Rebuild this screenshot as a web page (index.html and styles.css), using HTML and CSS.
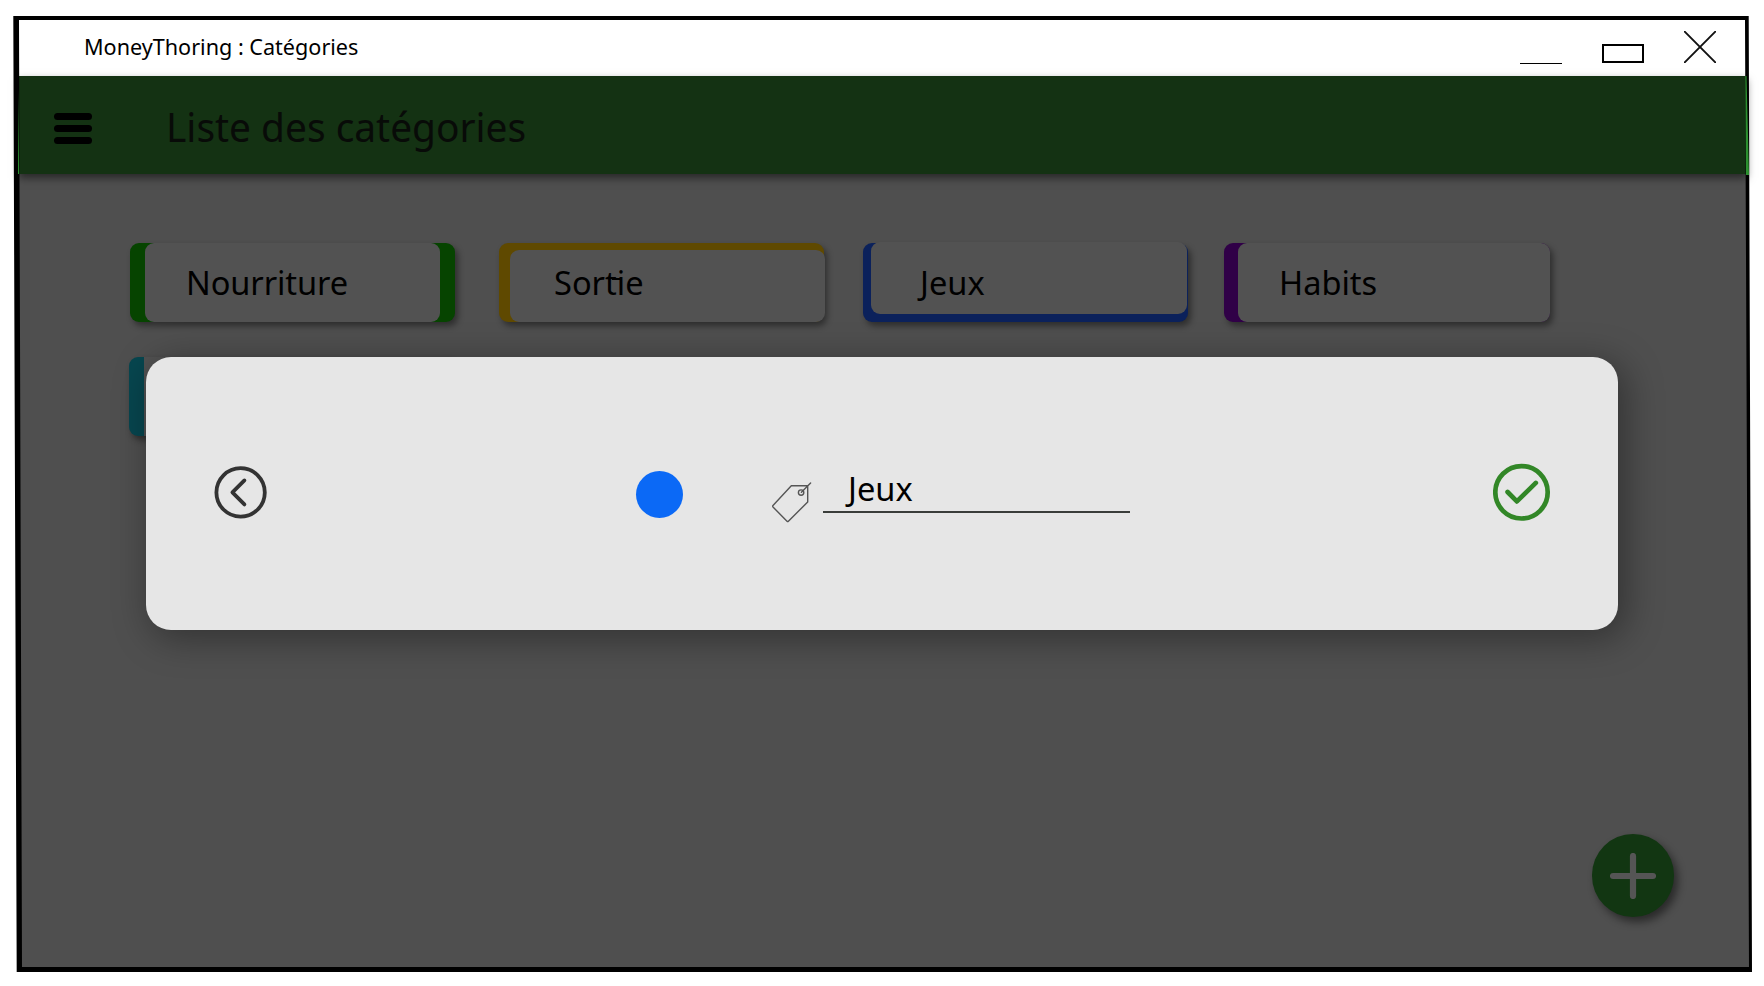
FILE: index.html
```html
<!DOCTYPE html>
<html lang="fr">
<head>
<meta charset="utf-8">
<title>MoneyThoring : Catégories</title>
<link rel="stylesheet" href="styles.css">
</head>
<body>
<div class="window">
  <header class="titlebar">
    <span class="title">MoneyThoring : Catégories</span>
    <div class="controls">
      <span class="minimize"></span>
      <span class="maximize"></span>
      <svg class="close" width="32" height="32" viewBox="0 0 32 32"><path d="M.7.7 31.3 31.3M31.3.7.7 31.3"/></svg>
    </div>
  </header>
  <nav class="appbar">
    <div class="menu"><i></i><i></i><i></i></div>
    <h1 class="heading">Liste des catégories</h1>
  </nav>
  <main class="content">
    <div class="cards">
      <div class="card food"><div class="face"><span>Nourriture</span></div></div>
      <div class="card outing"><div class="face"><span class="tie">Sortie</span></div></div>
      <div class="card games"><div class="face"><span>Jeux</span></div></div>
      <div class="card clothes"><div class="face"><span>Habits</span></div></div>
      <div class="card other"><div class="face"></div></div>
    </div>
  </main>
</div>
<svg class="frame" width="1764" height="986" viewBox="0 0 1764 986">
  <path d="M13.3 16H1748.7L1752 972H16.7ZM19 20 22 967H1749L1745 20Z" fill-rule="evenodd"/>
  <path class="edge" d="M18.6 90 19.1 174H18ZM1745.3 76 1746.5 76 1749 175H1746Z"/>
</svg>
<div class="fab"><svg width="46" height="46" viewBox="0 0 46 46"><path d="M23 3V43M3 23H43"/></svg></div>
<section class="dialog">
  <svg class="back" width="54" height="54" viewBox="0 0 54 54"><circle cx="27.6" cy="27.4" r="24.2"/><path d="M31.4 15.4 19.4 27.4 31.4 39.4"/></svg>
  <span class="swatch"></span>
  <svg class="tag" width="42" height="42" viewBox="770 481 42 42"><path d="M791.3 485.8H807.7V502L788.4 521.2Q787.7 521.9 787 521.2L773 507Q772.4 506.2 773 505.4ZM801.4 492.3 810.6 483.1"/><circle cx="801.1" cy="492.6" r="2.7"/></svg>
  <div class="field"><span>Jeux</span></div>
  <svg class="ok" width="58" height="58" viewBox="0 0 58 58"><circle cx="28.5" cy="29.3" r="26.2"/><path d="M14.6 29 23.9 38.4 42.8 19.9"/></svg>
</section>
</body>
</html>
```
FILE: styles.css
```css
* { box-sizing: border-box; }
body {
  margin: 0;
  width: 1764px;
  height: 986px;
  overflow: hidden;
  background: #fff;
  color: #000;
  font-family: "Noto Sans", "Open Sans", sans-serif;
  font-size: 32.6px;
}
svg { display: block; fill: none; stroke-linecap: round; stroke-linejoin: round; }
.window { padding-top: 20px; }
.titlebar {
  display: flex;
  justify-content: space-between;
  height: 56px;
  margin: 0 19px;
  padding: 11px 29px 0 65px;
}
.title { font-size: 21.6px; line-height: 32px; white-space: nowrap; }
.controls { display: flex; }
.minimize { width: 42px; height: 1px; margin: 32px 40px 0 0; background: #000; }
.maximize { width: 42px; height: 19px; margin: 13px 40px 0 0; border: 2px solid #000; }
.close { stroke: #111; stroke-width: 1.9; }
.appbar {
  position: relative;
  display: flex;
  height: 98px;
  margin: 0 18px;
  padding: 37px 0 0 36px;
  background: #143213;
  box-shadow: 1px 4px 8px rgba(0, 0, 0, .5);
}
.menu { display: grid; gap: 5px; width: 38px; height: 31px; }
.menu i { height: 7px; border-radius: 4px; background: #000; }
.heading {
  margin: -14px 0 0 74px;
  color: #080b08;
  font-size: 40.6px;
  font-weight: 400;
  line-height: 56px;
  white-space: nowrap;
  transform: scaleX(.958);
  transform-origin: left;
}
.content {
  height: 794px;
  margin: 0 15px 0 19px;
  padding: 69px 0 0 111px;
  background: #4f4f4f;
}
.cards {
  display: grid;
  grid-template-columns: 369px 364px 361px 326px;
  row-gap: 35px;
}
.card {
  display: flex;
  width: 325px;
  height: 79px;
  border-radius: 9px;
  box-shadow: 3px 4px 6px rgba(0, 0, 0, .42);
}
.face {
  flex: 1;
  border-radius: 9px;
  background: #525252;
  line-height: 44px;
}
.food { padding: 0 15px; background: #064400; }
.food .face { padding: 18px 0 0 41px; letter-spacing: -.1px; }
.outing { padding: 7px 0 0 11px; background: #5f4900; }
.outing .face { margin-right: -1px; padding: 11px 0 0 44px; }
.games { padding: 0 1px 8px 8px; background: #0b215b; }
.games .face { margin-top: -1px; padding: 19px 0 0 49px; }
.clothes { width: 326px; padding-left: 14px; background: #300047; }
.clothes .face { padding: 18px 0 0 41px; }
.other { margin-left: -1px; padding-left: 15px; background: #07464f; }
.other .face { border-radius: 0 9px 9px 0; }
.tie { position: relative; }
/* joins the crossbar of the t to the i */
.tie::after {
  content: "";
  position: absolute;
  left: 58px;
  top: 18px;
  width: 10px;
  height: 2px;
  background: #000;
}
.frame { position: absolute; left: 0; top: 0; fill: #000; }
.edge { fill: #2c9130; }
.fab {
  position: absolute;
  left: 1591.5px;
  top: 834.3px;
  display: grid;
  place-items: center;
  width: 82.5px;
  height: 82.5px;
  border-radius: 50%;
  background: #123612;
  box-shadow: 4px 5px 8px rgba(0, 0, 0, .48);
}
.fab svg { stroke: #555; stroke-width: 6.2; }
.dialog {
  position: absolute;
  left: 146px;
  top: 357px;
  display: flex;
  align-items: flex-start;
  width: 1472px;
  height: 273px;
  padding: 106px 67px 0;
  border-radius: 25px;
  background: #e6e6e6;
  box-shadow: 6px 7px 36px 2px rgba(0, 0, 0, .36);
}
.back { margin-top: 2px; stroke: #333; stroke-width: 3.8; }
.swatch {
  width: 47px;
  height: 47px;
  margin: 8px 0 0 369px;
  border-radius: 50%;
  background: #0b69f6;
}
.tag { margin: 18px 0 0 87px; stroke: #555; stroke-width: 1.4; }
.field {
  width: 307px;
  height: 50px;
  margin-left: 11px;
  padding-left: 25px;
  border-bottom: 2px solid #3a3d3a;
  line-height: 52px;
}
.ok { margin: 0 0 0 auto; stroke: #328727; stroke-width: 4.7; }
```
